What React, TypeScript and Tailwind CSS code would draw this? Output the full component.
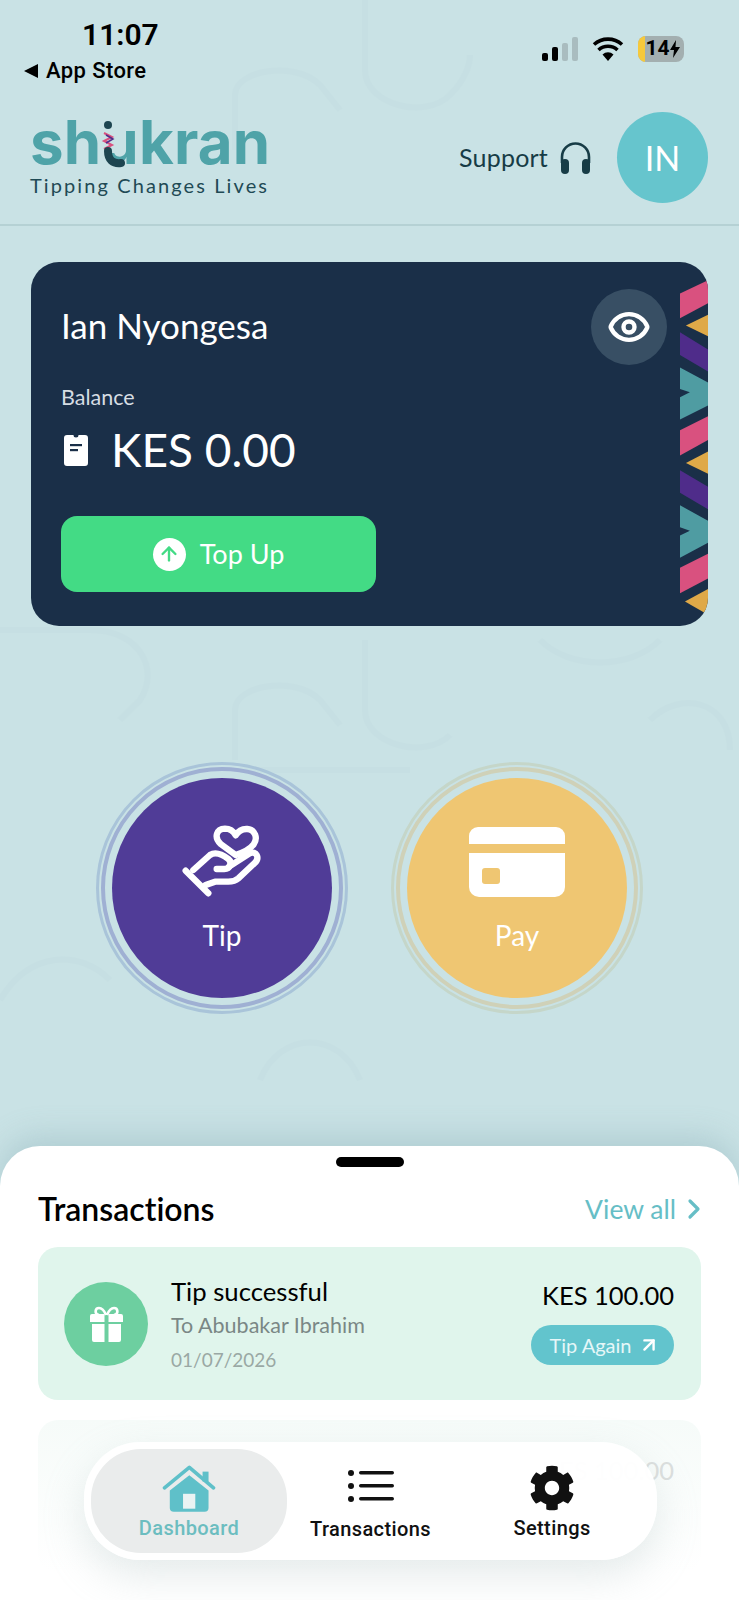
import React from 'react';
import { ChevronRight, Eye, ArrowUp, ArrowUpRight } from 'lucide-react';
import { FaCog } from 'react-icons/fa';

const HandHeartIcon = () => (
  <svg width="95" height="85" viewBox="0 0 285 255" fill="none" stroke="white" strokeWidth="19" strokeLinecap="round" strokeLinejoin="round">
    <path d="M182 105L137 72C116 52 124 27 150 26c15 0 26 9 32 20 8-13 20-20 35-19 24 2 32 28 19 46-8 11-30 24-54 32z" />
    <path d="M32 152l68 68" />
    <path d="M55 150l50-45c14-9 34-4 55 12 12 10 6 30-12 30h-23" />
    <path d="M162 140l62-40c20-9 32 14 14 30l-48 45c-9 8-19 10-30 10h-40l-28 10" />
  </svg>
);

const CardIcon = () => (
  <svg width="96" height="70" viewBox="0 0 96 70">
    <path d="M9 0h78a9 9 0 0 1 9 9v8H0V9a9 9 0 0 1 9-9z" fill="white" />
    <path d="M0 26h96v34a10 10 0 0 1-10 10H10A10 10 0 0 1 0 60z" fill="white" />
    <rect x="13" y="41" width="18" height="16" rx="3" fill="#efc672" />
  </svg>
);

const WalletIcon = () => (
  <svg width="24" height="31" viewBox="0 0 24 31">
    <path d="M3 0h6.500a2.500 2.500 0 0 0 5 0H21a3 3 0 0 1 3 3v25a3 3 0 0 1-3 3H3a3 3 0 0 1-3-3V3a3 3 0 0 1 3-3z" fill="white" />
    <rect x="6" y="9" width="12" height="2.200" fill="#1a2f48" />
    <rect x="6" y="14" width="8" height="2.200" fill="#1a2f48" />
  </svg>
);

const HeadphonesIcon = () => (
  <svg width="33" height="33" viewBox="0 0 33 33" fill="none">
    <path d="M3 22v-6a13.500 13.500 0 0 1 27 0v6" stroke="#173c46" strokeWidth="2.600" />
    <rect x="2" y="18" width="8" height="15" rx="4" fill="#173c46" />
    <rect x="23" y="18" width="8" height="15" rx="4" fill="#173c46" />
  </svg>
);

const GiftIcon = () => (
  <svg width="33" height="36" viewBox="0 0 33 36">
    <path d="M16 9c-2-5-4-7-7-7-4 0-5 6 0 7M17 9c2-5 4-7 7-7 4 0 5 6 0 7" fill="none" stroke="white" strokeWidth="2.600" />
    <path d="M2 8h12.500v8H0v-6a2 2 0 0 1 2-2zM18.500 8H31a2 2 0 0 1 2 2v6H18.500z" fill="white" />
    <path d="M2 18h12.500v18H4a2 2 0 0 1-2-2zM18.500 18H31v16a2 2 0 0 1-2 2H18.500z" fill="white" />
  </svg>
);

const HomeIcon = () => (
  <svg width="55" height="48" viewBox="65 25 165 145">
    <path d="M88 102L147 56l58 46v52a12 12 0 0 1-12 12H100a12 12 0 0 1-12-12z" fill="#5fc0c9" />
    <rect x="128" y="112" width="37" height="45" fill="#eaf3f3" />
    <path d="M72 94l75-62 73 62" fill="none" stroke="#5fc0c9" strokeWidth="11" strokeLinecap="round" strokeLinejoin="round" />
    <rect x="187" y="45" width="18" height="30" fill="#5fc0c9" />
  </svg>
);

const ListIcon = () => (
  <svg width="46" height="32" viewBox="0 0 46 32" fill="#111">
    <circle cx="3" cy="3" r="3" />
    <circle cx="3" cy="16" r="3" />
    <circle cx="3" cy="29" r="3" />
    <rect x="11" y="1" width="35" height="3.500" rx="1.700" />
    <rect x="11" y="14" width="35" height="3.500" rx="1.700" />
    <rect x="11" y="27" width="35" height="3.500" rx="1.700" />
  </svg>
);

const Stripes = () => (
  <svg className="absolute right-0 top-0" width="28" height="364" viewBox="120 6 85 1092">
    <polygon fill="#d9517f" points="120,95 205,55 205,125 120,170" />
    <polygon fill="#dfa948" points="138,192 205,160 205,225" />
    <polygon fill="#4f2c8a" points="120,213 205,265 205,332 120,282" />
    <polygon fill="#4f9ca2" points="120,320 205,365 205,435 120,478 120,410 150,395 120,385" />
    <polygon fill="#d9517f" points="120,510 205,468 205,540 120,587" />
    <polygon fill="#dfa948" points="138,610 205,575 205,642" />
    <polygon fill="#4f2c8a" points="120,632 205,682 205,750 120,700" />
    <polygon fill="#4f9ca2" points="120,738 205,785 205,852 120,897 120,830 150,815 120,805" />
    <polygon fill="#d9517f" points="120,928 205,885 205,960 120,1005" />
    <polygon fill="#dfa948" points="135,1030 205,992 205,1070" />
  </svg>
);

const BackgroundPattern = () => (
  <svg className="absolute inset-0" width="739" height="1150" viewBox="0 0 739 1150" fill="none" stroke="#c1dadf" strokeWidth="6" opacity="0.32">
    <path d="M235 150V95c0-25 60-35 85-10l20 25" />
    <path d="M365 0v70c0 35 60 50 85 25 15-15 20-30 20-40" />
    <path d="M235 760v-50c0-25 60-35 85-10l20 25" />
    <path d="M365 640v70c0 35 60 50 85 25" />
    <path d="M0 630h90c50 0 70 40 50 70l-20 20" />
    <path d="M540 640c30 30 90 30 120 0" />
    <path d="M650 720c30-30 80-20 80 30" />
    <path d="M240 770h170" />
    <path d="M0 1000c30-50 80-50 110-20" />
    <path d="M260 1080c20-50 80-50 100 0" />
  </svg>
);

const LogoU = () => (
  <span className="relative inline-block">
    u
    <svg className="absolute left-0 top-0" width="38" height="60" viewBox="0 0 38 60" fill="none">
      <rect x="1" y="15" width="13" height="24" fill="#c9e2e5" />
      <circle cx="7" cy="11" r="4" fill="#1d4550" />
      <path d="M3 19l8 4-8 4 8 4-8 4" stroke="#d9517f" strokeWidth="2" />
      <path d="M5 21l7 4-7 4" stroke="#4f2c8a" strokeWidth="1.500" />
      <path d="M7 37c0 9 5 13 13 12" stroke="#1d4550" strokeWidth="8" strokeLinecap="round" />
    </svg>
  </span>
);

const Nav = () => (
  <div className="absolute left-[84px] top-[1442px] w-[573px] h-[118px] rounded-[56px] bg-white/95 shadow-[0_16px_40px_rgba(170,190,190,0.3)] p-[7px] flex">
    <div className="w-[196px] rounded-[50px] bg-[#eaecec] flex flex-col items-center pt-[16px]">
      <HomeIcon />
      <span className="font-['Roboto',sans-serif] font-medium text-[20px] tracking-[0.4px] leading-6 mt-[3px] text-[#6cbdc0]">Dashboard</span>
    </div>
    <div className="flex-1 flex flex-col items-center pt-[21px] pr-[12px]">
      <ListIcon />
      <span className="font-['Roboto',sans-serif] font-medium text-[20px] tracking-[0.4px] leading-6 mt-[15px] text-[#111]">Transactions</span>
    </div>
    <div className="w-[184px] flex flex-col items-center pt-[16px] pr-[12px]">
      <FaCog size={46} color="#111" />
      <span className="font-['Roboto',sans-serif] font-medium text-[20px] tracking-[0.4px] leading-6 mt-[5px] text-[#111]">Settings</span>
    </div>
  </div>
);

export default function App() {
  return (
    <div className="relative w-[739px] h-[1600px] overflow-hidden bg-[#c9e2e5] font-['Lato',sans-serif]">
      <BackgroundPattern />

      <div className="relative flex flex-col h-full">
        {/* Status bar */}
        <div className="relative h-[100px] pl-[24px] pr-[55px] pt-[17px] flex justify-between shrink-0">
          <div>
            <div className="pl-[58px] font-['Roboto',sans-serif] font-semibold text-[30px] leading-[36px] text-black">11:07</div>
            <div className="flex items-center gap-2 mt-[5px] font-['Roboto',sans-serif] font-medium text-[22px] tracking-[0.4px] leading-[26px] text-black">
              <span className="w-0 h-0 border-y-[7px] border-y-transparent border-r-[14px] border-r-black" />
              App Store
            </div>
          </div>
          <div className="flex items-center gap-[14px] h-[26px] mt-[19px]">
            <div className="flex items-end gap-[3.500px] h-[24px]">
              <span className="w-[6.500px] h-[8px] rounded-[2px] bg-black" />
              <span className="w-[6.500px] h-[14px] rounded-[2px] bg-black" />
              <span className="w-[6.500px] h-[18px] rounded-[2px] bg-[#a9bcbf]" />
              <span className="w-[6.500px] h-[24px] rounded-[2px] bg-[#a9bcbf]" />
            </div>
            <svg width="32" height="24" viewBox="0 0 32 24">
              <path d="M16 24l-5.500-6.500a8 8 0 0 1 11 0z" fill="black" />
              <path d="M6.500 13a14 14 0 0 1 19 0M2 7.500a21 21 0 0 1 28 0" fill="none" stroke="black" strokeWidth="3.600" />
            </svg>
            <div className="relative w-[46px] h-[26px] rounded-[8px] bg-[#a3afb0] overflow-hidden flex items-center justify-center font-['Roboto',sans-serif] font-bold text-[21px] text-black">
              <span className="absolute left-0 top-0 bottom-0 w-[7px] bg-[#f6c93c]" />
              <span className="relative pl-[3px]">14</span>
              <svg className="relative" width="10" height="18" viewBox="0 0 10 18"><path d="M6 0L0 10h4l-1 8 7-11H5.500z" fill="black" /></svg>
            </div>
          </div>
        </div>

        {/* Header */}
        <div className="h-[126px] shrink-0 border-b-2 border-[#b5d1d4] pl-[30px] pr-[31px] flex items-start justify-between">
          <div className="pt-[14px]">
            <div className="font-['Inter',sans-serif] font-bold text-[60px] leading-[56px] tracking-[0.2px] text-[#4fa3a8]">sh<LogoU />kran</div>
            <div className="mt-[3px] text-[20px] leading-6 tracking-[2.100px] text-[#1f4a55]">Tipping Changes Lives</div>
          </div>
          <div className="flex items-center pt-[12px]">
            <span className="text-[25px] tracking-[0.200px] text-[#173c46]">Support</span>
            <span className="ml-[11px]"><HeadphonesIcon /></span>
            <div className="ml-[25px] w-[91px] h-[91px] rounded-full bg-[#66c5cd] flex items-center justify-center text-[34px] text-white">IN</div>
          </div>
        </div>

        {/* Balance card */}
        <div className="relative mt-[36px] mx-[31px] h-[364px] shrink-0 rounded-[28px] bg-[#1a2f48] overflow-hidden px-[30px] pt-[40px]">
          <Stripes />
          <div className="absolute right-[41px] top-[27px] w-[76px] h-[76px] rounded-full bg-[#384f64] flex items-center justify-center">
            <Eye size={44} strokeWidth={2.400} className="text-white" />
          </div>
          <div className="text-[35px] leading-[46px] text-white">Ian Nyongesa</div>
          <div className="mt-[37px] text-[21.500px] leading-6 text-[#d6dde3]">Balance</div>
          <div className="mt-[13px] pl-[3px] flex items-center gap-[23px]">
            <WalletIcon />
            <span className="text-[46px] leading-[56px] text-white">KES 0.00</span>
          </div>
          <div className="mt-[38px] w-[315px] h-[76px] rounded-[16px] bg-[#43db85] flex items-center justify-center gap-[14px] text-[27px] text-white">
            <span className="w-[33px] h-[33px] rounded-full bg-white flex items-center justify-center">
              <ArrowUp size={22} strokeWidth={2.600} className="text-[#43db85]" />
            </span>
            Top Up
          </div>
        </div>

        {/* Tip and Pay */}
        <div className="mt-[136px] pl-[96px] flex gap-[43px] shrink-0">
          <div className="w-[252px] h-[252px] rounded-full border-[3px] border-[#a9c4d9] p-[2px]">
            <div className="w-full h-full rounded-full border-[4px] border-[#9fb0d3] p-[7px]">
              <div className="w-full h-full rounded-full bg-[#503c97] flex flex-col items-center pt-[42px] text-white">
                <HandHeartIcon />
                <span className="mt-[14px] text-[28px] leading-8">Tip</span>
              </div>
            </div>
          </div>
          <div className="w-[252px] h-[252px] rounded-full border-[3px] border-[#c5d6c9] p-[2px]">
            <div className="w-full h-full rounded-full border-[4px] border-[#cfd1b8] p-[7px]">
              <div className="w-full h-full rounded-full bg-[#efc672] flex flex-col items-center pt-[49px] text-white">
                <CardIcon />
                <span className="mt-[22px] text-[28px] leading-8">Pay</span>
              </div>
            </div>
          </div>
        </div>

        {/* Transactions sheet */}
        <div className="relative mt-auto h-[454px] shrink-0 rounded-t-[40px] bg-white shadow-[0_-10px_30px_rgba(120,160,170,0.3)] px-[38px] pt-[11px]">
          <div className="mx-auto w-[68px] h-[10px] rounded-full bg-black" />
          <div className="mt-[24px] flex items-center justify-between">
            <span className="font-semibold text-[32px] leading-9 text-black [font-variant-ligatures:none]">Transactions</span>
            <span className="flex items-center text-[26.500px] leading-9 text-[#66bec6]">
              View all
              <ChevronRight size={32} strokeWidth={2.400} className="ml-[2px] -mr-[9px]" />
            </span>
          </div>
          <div className="mt-[20px] h-[153px] rounded-[20px] bg-[#e0f5ec] flex items-center pl-[26px] pr-[27px]">
            <div className="w-[84px] h-[84px] rounded-full bg-[#6dcfa0] flex items-center justify-center">
              <GiftIcon />
            </div>
            <div className="ml-[23px] flex-1">
              <div className="text-[25.700px] leading-8 text-black">Tip successful</div>
              <div className="mt-[4px] text-[21.500px] leading-7 text-[#7a8785]">To Abubakar Ibrahim</div>
              <div className="mt-[9px] text-[19px] leading-6 text-[#9aa8a4]">01/07/2026</div>
            </div>
            <div className="flex flex-col items-end -mt-[4px]">
              <div className="text-[25.500px] leading-8 text-black">KES 100.00</div>
              <div className="mt-[14px] w-[143px] h-[40px] pl-[4px] rounded-full bg-[#62c4cd] flex items-center justify-center gap-[6px] text-[20px] text-[#e6f7f8]">
                Tip Again
                <ArrowUpRight size={22} strokeWidth={2.600} className="text-white" />
              </div>
            </div>
          </div>
          {/* second row, faded under the nav */}
          <div className="mt-[20px] h-[153px] rounded-[20px] bg-gradient-to-b from-[#f6fbf9] to-white flex items-start justify-end pt-[34px] pr-[27px]">
            <div className="text-[25.500px] leading-8 text-[#dcdfde]">KES 100.00</div>
          </div>
        </div>
      </div>

      <Nav />
    </div>
  );
}
